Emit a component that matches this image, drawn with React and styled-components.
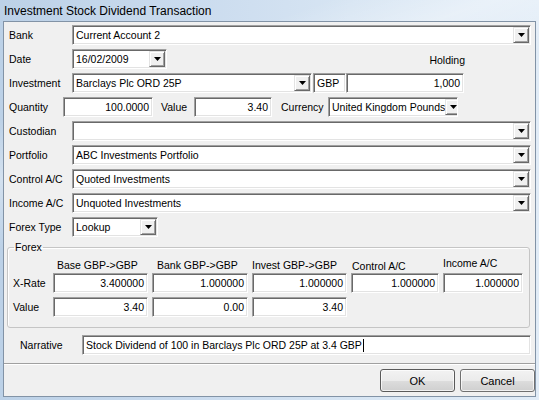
import React from 'react'
import styled, {createGlobalStyle} from 'styled-components'

const GlobalStyle = createGlobalStyle`
	html, body {
		margin: 0;
		padding: 0;
	}

	body {
		width: 539px;
		height: 400px;
		overflow: hidden;
		font-family: "Liberation Sans", Arial, sans-serif;
		font-size: 10.5px;
		color: #000;
	}
`

const Arrow = () => (
	<svg width="7" height="4" viewBox="0 0 7 4">
		<polygon points="0,0 7,0 3.5,4" fill="#000" />
	</svg>
)

const Combo = ({value, width, align}) => (
	<Edit $width={width} $align={align} $combo>
		<Text>{value}</Text>
		<DropButton><Arrow /></DropButton>
	</Edit>
)

const App = () => {
	return (
		<Window>
			<GlobalStyle />
			<TitleBar>Investment Stock Dividend Transaction</TitleBar>

			<Client>
				<Form>
					<Row>
						<Label>Bank</Label>
						<Combo value="Current Account 2" />
					</Row>

					<Row>
						<Label>Date</Label>
						<Combo value="16/02/2009" width={95} />
						<Holding>Holding</Holding>
					</Row>

					<Row>
						<Label>Investment</Label>
						<Combo value="Barclays Plc ORD 25P" width={240} />
						<Edit $width={33} $gap={1}><Text>GBP</Text></Edit>
						<Edit $width={118} $align="right"><Text>1,000</Text></Edit>
					</Row>

					<Row>
						<Label $w={54}>Quantity</Label>
						<Edit $width={90} $align="right"><Text>100.0000</Text></Edit>
						<Label $w={33} $gap={8}>Value</Label>
						<Edit $width={78} $align="right"><Text>3.40</Text></Edit>
						<Label $w={47} $gap={9}>Currency</Label>
						<Combo value="United Kingdom Pounds" width={130} />
					</Row>

					<Row>
						<Label>Custodian</Label>
						<Combo value="" />
					</Row>

					<Row>
						<Label>Portfolio</Label>
						<Combo value="ABC Investments Portfolio" />
					</Row>

					<Row>
						<Label>Control A/C</Label>
						<Combo value="Quoted Investments" />
					</Row>

					<Row>
						<Label>Income A/C</Label>
						<Combo value="Unquoted Investments" />
					</Row>

					<Row>
						<Label>Forex Type</Label>
						<Combo value="Lookup" width={86} />
					</Row>
				</Form>

				<Group>
					<Legend>Forex</Legend>

					<ForexGrid>
						<span />
						<Heading $pl={4} $pt={5}>Base GBP-&gt;GBP</Heading>
						<Heading $pl={5} $pt={5}>Bank GBP-&gt;GBP</Heading>
						<Heading $pl={0} $pt={5}>Invest GBP-&gt;GBP</Heading>
						<Heading $pl={1} $pt={6}>Control A/C</Heading>
						<Heading $pl={0} $pt={3}>Income A/C</Heading>

						<GridLabel>X-Rate</GridLabel>
						<Edit $align="right"><Text>3.400000</Text></Edit>
						<Edit $align="right"><Text>1.000000</Text></Edit>
						<Edit $align="right"><Text>1.000000</Text></Edit>
						<Edit $align="right"><Text>1.000000</Text></Edit>
						<Edit $align="right"><Text>1.000000</Text></Edit>

						<GridLabel>Value</GridLabel>
						<Edit $align="right"><Text>3.40</Text></Edit>
						<Edit $align="right"><Text>0.00</Text></Edit>
						<Edit $align="right"><Text>3.40</Text></Edit>
					</ForexGrid>
				</Group>

				<NarrativeRow>
					<Label $w={62}>Narrative</Label>
					<Edit>
						<Text>Stock Dividend of 100 in Barclays Plc ORD 25P at 3.4 GBP</Text>
						<Caret />
					</Edit>
				</NarrativeRow>

				<Separator />

				<Buttons>
					<Button $default>OK</Button>
					<Button>Cancel</Button>
				</Buttons>
			</Client>
		</Window>
	)
}

export default App

const Window = styled.div`
	width: 539px;
	height: 400px;
	box-sizing: border-box;
	display: flex;
	flex-direction: column;
	padding: 0 3px 3px 3px;
	background:
		linear-gradient(160deg, rgba(255,255,255,0) 20%, rgba(255,255,255,.35) 30%, rgba(255,255,255,0) 42%),
		linear-gradient(90deg, #bcd1e7 0%, #cadbee 35%, #d7e5f3 65%, #e1ecf7 100%);
`

const TitleBar = styled.div`
	height: 21px;
	flex: none;
	display: flex;
	align-items: center;
	padding-left: 1px;
	font-family: "Liberation Sans", Arial, sans-serif;
	font-size: 12px;
	color: #000;
`

const Client = styled.div`
	flex: 1;
	display: flex;
	flex-direction: column;
	background: #f0f0f0;
	border: 1px solid #8293a6;
`

const Form = styled.div`
	display: flex;
	flex-direction: column;
	gap: 4px;
	padding: 3px 4px 0 5px;
`

const Row = styled.div`
	display: flex;
	align-items: center;
	height: 20px;
`

const Label = styled.div`
	flex: none;
	width: ${p => p.$w || 63}px;
	margin-left: ${p => p.$gap || 0}px;
	white-space: nowrap;
`

const Holding = styled.div`
	margin-left: auto;
	margin-right: 66px;
	padding-top: 2px;
`

const Edit = styled.div`
	position: relative;
	box-sizing: border-box;
	height: 20px;
	flex: ${p => (p.$width ? 'none' : '1')};
	width: ${p => (p.$width ? p.$width + 'px' : 'auto')};
	margin-left: ${p => p.$gap || 0}px;
	display: flex;
	align-items: center;
	justify-content: ${p => (p.$align === 'right' ? 'flex-end' : 'flex-start')};
	padding: ${p => (p.$combo ? '0 1px 0 3px' : '0 3px 0 3px')};
	background: #fff;
	border-top: 1px solid #a0a0a0;
	border-left: 1px solid #a0a0a0;
	border-bottom: 1px solid #fff;
	border-right: 1px solid #fff;
	box-shadow: inset 1px 1px 0 #696969, inset -1px -1px 0 #e3e3e3;
	white-space: nowrap;
	overflow: hidden;
`

const Text = styled.span`
	flex: ${p => (p.$grow ? 1 : 'none')};
	line-height: 14px;
`

const Caret = styled.span`
	width: 1px;
	height: 13px;
	background: #000;
	margin-left: 1px;
`

const DropButton = styled.div`
	box-sizing: border-box;
	margin-left: auto;
	width: 16px;
	height: 16px;
	flex: none;
	display: flex;
	align-items: center;
	justify-content: center;
	background: #f0f0f0;
	border-top: 1px solid #e3e3e3;
	border-left: 1px solid #e3e3e3;
	border-bottom: 1px solid #696969;
	border-right: 1px solid #696969;
	box-shadow: inset 1px 1px 0 #fff, inset -1px -1px 0 #a0a0a0;
`

const Group = styled.fieldset`
	margin: 4px 5px 0 3px;
	padding: 0 0 10px 5px;
	border: 1px solid #c5c5c5;
	border-radius: 3px;
	box-shadow: inset 1px 1px 0 #fff;
`

const Legend = styled.legend`
	padding: 0 1px;
	margin-left: 1px;
	line-height: 12px;
`

const ForexGrid = styled.div`
	display: grid;
	grid-template-columns: 36px 95px 96px 95px 88px 80px;
	grid-template-rows: 19px 24px 20px;
	column-gap: 4px;
	margin-top: 1px;
	align-items: start;
`

const Heading = styled.div`
	padding-left: ${p => p.$pl}px;
	padding-top: ${p => p.$pt}px;
	line-height: 12px;
	white-space: nowrap;
`

const GridLabel = styled.div`
	height: 20px;
	display: flex;
	align-items: center;
`

const NarrativeRow = styled(Row)`
	margin-top: 7px;
	padding: 0 4px 0 16px;
`

const Separator = styled.div`
	margin-top: 8px;
	border-top: 1px solid #a0a0a0;
	border-bottom: 1px solid #fff;
`

const Buttons = styled.div`
	display: flex;
	justify-content: flex-end;
	gap: 5px;
	margin-top: 4px;
`

const Button = styled.button`
	box-sizing: border-box;
	width: 75px;
	height: 23px;
	font-family: "Liberation Sans", Arial, sans-serif;
	font-size: 11px;
	color: #000;
	border: 1px solid ${p => (p.$default ? '#5a5a5a' : '#707070')};
	border-radius: 3px;
	background: linear-gradient(#f2f2f2 0%, #ebebeb 50%, #dddddd 51%, #cfcfcf 100%);
	box-shadow: inset 0 0 0 1px rgba(255,255,255,.7);
	padding: 0;
`
